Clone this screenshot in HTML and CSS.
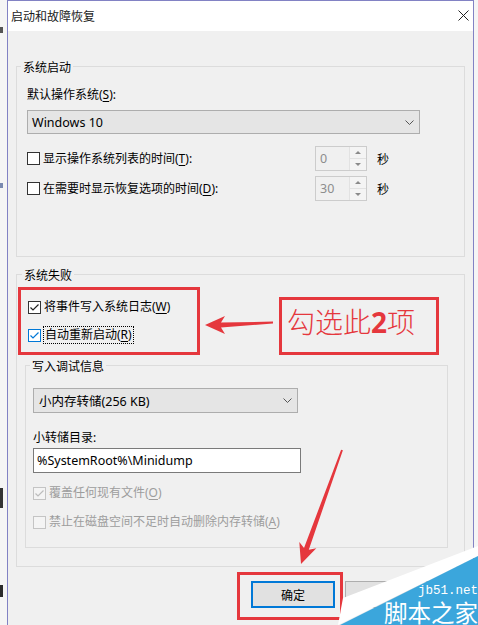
FILE: index.html
```html
<!DOCTYPE html>
<html lang="zh-CN">
<head>
  <meta charset="UTF-8">
  <title>启动和故障恢复</title>
  <link rel="stylesheet" href="styles.css">
</head>
<body>
  <div class="screen">
    <div class="desk">
      <span class="mark m1"></span>
      <span class="mark m2"></span>
      <span class="mark m3"></span>
      <span class="mark m4"></span>
    </div>

    <div class="window">
      <div class="titlebar">
        <span class="title">启动和故障恢复</span>
        <svg class="close" width="11" height="11" viewBox="0 0 11 11"><path d="M0.5 0.5L10.5 10.5M10.5 0.5L0.5 10.5"/></svg>
      </div>

      <div class="content">
        <fieldset class="group startup">
          <legend>系统启动</legend>
          <div class="field-label">默认操作系统(<u>S</u>):</div>
          <div class="combo os">
            <span>Windows 10</span>
            <svg width="9" height="5" viewBox="0 0 9 5"><path d="M0.5 0.5L4.5 4.5L8.5 0.5"/></svg>
          </div>
          <div class="timers">
            <div class="timer-row">
              <label class="check"><span class="box"></span><span>显示操作系统列表的时间(<u>T</u>):</span></label>
              <div class="spin"><span class="val">0</span><span class="spin-btns"><i class="up"></i><i class="down"></i></span></div>
              <span class="unit">秒</span>
            </div>
            <div class="timer-row">
              <label class="check"><span class="box"></span><span>在需要时显示恢复选项的时间(<u>D</u>):</span></label>
              <div class="spin"><span class="val">30</span><span class="spin-btns"><i class="up"></i><i class="down"></i></span></div>
              <span class="unit">秒</span>
            </div>
          </div>
        </fieldset>

        <fieldset class="group failure">
          <legend>系统失败</legend>
          <label class="check">
            <span class="box"><svg viewBox="0 0 11 11"><path d="M1.5 5.5L4 8L9.5 2.5"/></svg></span><span>将事件写入系统日志(<u>W</u>)</span>
          </label>
          <label class="check focused">
            <span class="box"><svg viewBox="0 0 11 11"><path d="M1.5 5.5L4 8L9.5 2.5"/></svg></span><span class="focus">自动重新启动(<u>R</u>)</span>
          </label>

          <fieldset class="group debug">
            <legend>写入调试信息</legend>
            <div class="combo dump">
              <span>小内存转储(256 KB)</span>
              <svg width="9" height="5" viewBox="0 0 9 5"><path d="M0.5 0.5L4.5 4.5L8.5 0.5"/></svg>
            </div>
            <div class="field-label dir-label">小转储目录:</div>
            <div class="textbox">%SystemRoot%\Minidump</div>
            <label class="check disabled overwrite">
              <span class="box"><svg viewBox="0 0 11 11"><path d="M1.5 5.5L4 8L9.5 2.5"/></svg></span><span>覆盖任何现有文件(<u>O</u>)</span>
            </label>
            <label class="check disabled">
              <span class="box"></span><span>禁止在磁盘空间不足时自动删除内存转储(<u>A</u>)</span>
            </label>
          </fieldset>
        </fieldset>

        <div class="buttons">
          <button class="btn default">确定</button>
          <button class="btn" aria-label="取消"></button>
        </div>
      </div>
    </div>

    <!-- red markup drawn over the dialog -->
    <div class="frame frame-checks"></div>
    <div class="frame callout">勾选此<b>2</b>项</div>
    <div class="frame frame-ok"></div>
    <svg class="arrows" width="478" height="625" viewBox="0 0 478 625">
      <polygon points="205,325 225,316 221,322.5 273,321.6 273,323.4 221,327.5 225,334"/>
      <polygon points="301,564 316.3,548.2 308.8,549.7 342.9,450.3 341.1,449.7 304,548 299.3,542.1"/>
    </svg>

    <!-- site badge in the corner -->
    <svg class="badge" width="478" height="625" viewBox="0 0 478 625">
      <polygon class="wedge" points="338,625 343,598 478,546 478,556"/>
      <polygon class="fill" points="340,625 478,556 478,625"/>
    </svg>
    <div class="site">
      <span class="site-url">jb51.net</span>
      <span class="site-name">脚本之家</span>
    </div>
  </div>
</body>
</html>
```

FILE: styles.css
```css
body {
  margin: 0;
  font-family: "Noto Sans", "Noto Sans CJK SC", sans-serif;
  font-size: 12px;
  color: #000;
}

.screen {
  position: relative;
  display: flex;
  width: 478px;
  height: 625px;
  overflow: hidden;
  background: #f5f5f5;
}

/* strip of the desktop behind the dialog */
.desk {
  flex: none;
  width: 7px;
  display: flex;
  flex-direction: column;
}

.mark {
  display: block;
  width: 3px;
  background: #555;
}

.m1 { height: 6px; margin-top: 27px; }
.m2 { height: 5px; margin-top: 150px; background: #7a8ab0; }
.m3 { height: 20px; margin-top: 300px; background: #333; }
.m4 { height: 12px; margin-top: 77px; background: #2b2b2b; }

.window {
  flex: none;
  width: 465px;
  border: 1px solid #8282c4;
  border-bottom: none;
  background: #f0f0f0;
}

.titlebar {
  height: 30px;
  background: #fff;
  display: flex;
  align-items: center;
  justify-content: space-between;
  padding: 0 4px 0 3px;
}

.title {
  color: #1a1a1a;
}

.close {
  margin-bottom: 2px;
  fill: none;
  stroke: #222;
  stroke-width: 1;
}

.content {
  padding: 0 8px;
}

.group {
  margin: 0;
  min-width: 0;
  border: 1px solid #dcdcdc;
  padding: 0 10px;
}

.group legend {
  margin-left: -6px;
  padding: 3px 2px 0;
  line-height: 12px;
}

.startup {
  margin-top: 28px;
  padding: 13px 10px 55px;
}

.field-label {
  line-height: 16px;
}

u {
  text-decoration-thickness: 1px;
  text-underline-offset: 2px;
}

.combo {
  box-sizing: border-box;
  display: flex;
  align-items: center;
  justify-content: space-between;
  border: 1px solid #adadad;
  background: #e5e5e5;
  font-size: 12.5px;
}

.combo svg {
  fill: none;
  stroke: #555;
  stroke-width: 1;
}

.os {
  width: 393px;
  height: 24px;
  margin-top: 7px;
  padding: 0 5px 0 4px;
}

.timers {
  display: flex;
  flex-direction: column;
  gap: 5px;
  margin-top: 12px;
}

.timer-row {
  display: flex;
  align-items: center;
  width: 362px;
  height: 25px;
}

.check {
  display: flex;
  align-items: center;
  gap: 3px;
  line-height: 16px;
}

.box {
  box-sizing: border-box;
  flex: none;
  display: flex;
  width: 13px;
  height: 13px;
  border: 1px solid #333;
  background: #fff;
}

.box svg {
  width: 11px;
  height: 11px;
  fill: none;
  stroke: #222;
  stroke-width: 1.2;
}

.spin {
  box-sizing: border-box;
  display: flex;
  width: 52px;
  height: 25px;
  margin-left: auto;
  border: 1px solid #cccccc;
  background: #f0f0f0;
  color: #8d8d8d;
  font-size: 12.5px;
}

.spin .val {
  flex: 1;
  padding-left: 4px;
  line-height: 23px;
}

.spin-btns {
  display: flex;
  flex-direction: column;
  width: 16px;
  border-left: 1px solid #e2e2e2;
  background: #f4f4f4;
}

.spin-btns i {
  flex: 1;
  display: flex;
  align-items: center;
  justify-content: center;
}

.spin-btns .up {
  border-bottom: 1px solid #e2e2e2;
}

.spin-btns .up::after,
.spin-btns .down::after {
  content: "";
  border-left: 3px solid transparent;
  border-right: 3px solid transparent;
}

.spin-btns .up::after {
  border-bottom: 3px solid #8a8a8a;
}

.spin-btns .down::after {
  border-top: 3px solid #8a8a8a;
}

.unit {
  margin-left: 10px;
}

.failure {
  margin-top: 10px;
  padding: 17px 16px 18px 11px;
}

.failure > .check + .check {
  margin-top: 12px;
}

.focused .box {
  border-color: #0078d7;
}

.focused .box svg {
  stroke: #0078d7;
}

.focus {
  padding: 0 1px;
  line-height: 16px;
  outline: 1px dotted #000;
}

.debug {
  margin: 15px 0 0 -3px;
  padding: 15px 7px 17px;
}

.debug legend {
  margin-left: -3px;
}

.dump {
  width: 265px;
  height: 25px;
  padding: 0 5px 0 5px;
}

.dir-label {
  margin-top: 17px;
}

.textbox {
  box-sizing: border-box;
  width: 268px;
  height: 25px;
  margin-top: 2px;
  padding-left: 3px;
  border: 1px solid #7a7a7a;
  background: #fff;
  font-size: 12.5px;
  line-height: 23px;
}

.disabled {
  color: #9d9d9d;
}

.disabled .box {
  border-color: #c4c4c4;
  background: #f4f4f4;
}

.disabled .box svg {
  stroke: #bcbcbc;
}

.overwrite {
  margin-top: 12px;
}

.overwrite + .check {
  margin-top: 13px;
}

.buttons {
  display: flex;
  gap: 10px;
  margin-top: 14px;
  padding-left: 235px;
}

.btn {
  box-sizing: border-box;
  width: 84px;
  height: 27px;
  padding: 0;
  border: 1px solid #adadad;
  background: #e1e1e1;
  font: inherit;
  color: #000;
}

.btn.default {
  border: 2px solid #0078d7;
}

/* annotation layer */
.frame {
  position: absolute;
  box-sizing: border-box;
  border: 3px solid #e5373d;
}

.frame-checks {
  left: 18px;
  top: 287px;
  width: 182px;
  height: 68px;
}

.callout {
  left: 279px;
  top: 297px;
  width: 160px;
  height: 58px;
  padding: 7px 0 0 5px;
  color: #e5373d;
  font-family: "Noto Sans CJK SC", sans-serif;
  font-size: 28px;
  font-weight: 300;
  line-height: 28px;
}

.callout b {
  font-family: "Noto Sans", sans-serif;
  font-weight: 700;
}

.frame-ok {
  left: 237px;
  top: 572px;
  width: 106px;
  height: 48px;
}

.arrows,
.badge {
  position: absolute;
  left: 0;
  top: 0;
}

.arrows polygon {
  fill: #e5373d;
}

.badge .wedge {
  fill: #fff;
}

.badge .fill {
  fill: #3ba6dc;
}

.site {
  position: absolute;
  left: 381px;
  top: 584px;
  width: 97px;
  display: flex;
  flex-direction: column;
  align-items: flex-end;
  color: #fff;
}

.site-url {
  font-family: "Liberation Mono", monospace;
  font-size: 12.5px;
  line-height: 15px;
}

.site-name {
  font-family: "Noto Sans CJK SC", sans-serif;
  font-size: 23.5px;
  line-height: 26px;
}
```
